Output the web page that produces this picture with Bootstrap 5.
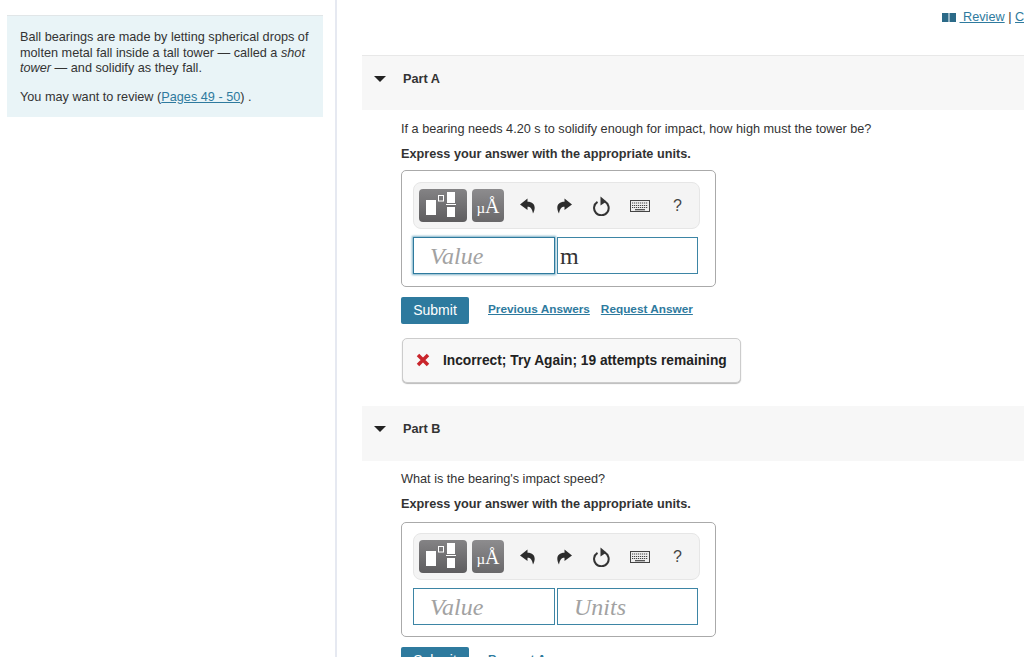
<!DOCTYPE html>
<html lang="en">
<head>
  <meta charset="UTF-8" />
  <title>Part A</title>
  <link href="https://cdn.jsdelivr.net/npm/bootstrap@5.3.0/dist/css/bootstrap.min.css" rel="stylesheet">
  <style>
    html, body { height: 657px; overflow: hidden; }
    body { font-family: "Liberation Sans", Arial, sans-serif; font-size: 12.7px; color: #333; background: #fff; }
    a { color: #2e7a9e; }
    .side-col { width: 337px; flex: none; border-right: 2px solid #e6e9f1; padding: 15px 12px 0 7px; }
    .intro-box { background: #e9f4f7; border-top: 1px solid #e1e6e8; height: 102px; padding: 14px 12px 0 13px; line-height: 15.6px; }
    .intro-box p { margin: 0 0 13px; }
    .main-col { flex: 1; min-width: 0; padding-left: 25px; }
    .top-links { height: 55px; padding: 10px 0 0 580px; white-space: nowrap; overflow: hidden; line-height: 15px; }
    .part-head { height: 55px; background: #f7f7f7; margin-bottom: 10px; padding: 0 0 7px 12px; font-weight: 700; color: #333; }
    .part-head.first-part { border-top: 1px solid #e8e8e8; }
    .caret-down { width: 0; height: 0; border-left: 6px solid transparent; border-right: 6px solid transparent; border-top: 6px solid #222; margin: -2px 17px 0 0; }
    .part-body { padding-left: 39px; }
    .part-body p { margin: 0; line-height: 16px; }
    .prompt { margin-bottom: 9px !important; padding-top: 1px; }
    .prompt.second-prompt { padding-top: 0; }
    .answer-box { width: 315px; border: 1px solid #aaa; border-radius: 5px; margin-top: 8px; padding: 11px 11px 12px; }
    .answer-box.second-box { margin-top: 10px; padding: 10px 11px 11px; }
    .tool-bar { width: 287px; height: 47px; background: #f4f4f4; border: 1px solid #e6e6e6; border-radius: 8px; padding: 6px 5px; }
    .tool-btn { height: 33px; border-radius: 4px; background: linear-gradient(#848385, #5e5d5f); }
    .tool-btn.wide { width: 48px; margin-right: 5px; }
    .tool-btn.narrow { width: 32px; background: linear-gradient(#8d8c8e, #69686a); color: #fff; font-family: "Liberation Serif", serif; font-size: 15px; line-height: 35px; text-align: center; white-space: nowrap; }
    .tool-btn.narrow b { font-weight: 400; font-size: 20px; }
    .tool-icons { padding-left: 16px; gap: 20px; color: #333; }
    .tool-icons .qmark { font-size: 16px; color: #444; margin-left: 3px; }
    .field-row { gap: 2px; margin-top: 8px; }
    .field { height: 37px; border: 1px solid #3d85a5; background: #fff; font-family: "Liberation Serif", serif; font-size: 24px; line-height: 36px; width: 142px; color: #333; }
    .field.unit { width: 141px; }
    .field.hint { color: #a2a2a2; font-style: italic; padding-left: 16px; }
    .field.active { box-shadow: 0 0 2px 1px #7db0c6; border-color: #2e7a9e; }
    .field.fill { padding-left: 2px; }
    .action-row { margin-top: 10px; gap: 19px; }
    .submit-btn { width: 68px; height: 27px; background: #2e7a9e; color: #fff; border-radius: 2px; font-size: 14px; padding: 0; border: 0; line-height: 27px; }
    .action-links { gap: 11px; font-size: 11.8px; font-weight: 700; margin-top: -2px; }
    .result-box { width: 339px; height: 45px; margin: 14px 0 23px 1px; background: #f8f8f8; border: 1px solid #ccc; border-radius: 5px; box-shadow: 0 1px 1px #bbb; padding: 1px 0 0 13px; font-size: 13.75px; font-weight: 700; color: #222; gap: 13px; }
    .result-box svg { margin-top: -2px; }
  </style>
</head>
<body>

  <svg width="0" height="0" class="d-block">
    <defs>
      <symbol id="ic-tmpl" viewBox="0 0 48 33">
        <rect x="7" y="11" width="10" height="15" fill="#fff"/>
        <rect x="19.500" y="6.500" width="5" height="5.500" fill="none" stroke="#fff"/>
        <rect x="28" y="3" width="8" height="11" fill="#fff"/>
        <rect x="27" y="15" width="10" height="1" fill="#fff"/>
        <rect x="28" y="18" width="8" height="10" fill="#fff"/>
      </symbol>
      <symbol id="ic-undo" viewBox="0 0 16 16">
        <path d="M7.500 0.500 L0 6.500 L7.500 12 V8.800 C10.500 8.800 12 10.500 13 15.500 C16.500 9 14.500 3.800 7.500 3.800 Z" fill="#2c2c2c"/>
      </symbol>
      <symbol id="ic-reset" viewBox="0 0 18 20">
        <path d="M5.500 5.800 A7.300 7.300 0 1 0 12.500 5.400" fill="none" stroke="#333" stroke-width="2"/>
        <path d="M8.500 0.500 L14.500 5.500 L8.500 9.500 Z" fill="#333"/>
      </symbol>
      <symbol id="ic-keys" viewBox="0 0 20 12">
        <rect x="0.500" y="0.500" width="19" height="11" fill="#eee" stroke="#444"/>
        <path d="M2 3 H18 M2 5.500 H18 M2 7.500 H18" stroke="#444" stroke-width="1.200" stroke-dasharray="1.200 .8"/>
        <path d="M5 9.700 H15" stroke="#444" stroke-width="1.200"/>
      </symbol>
    </defs>
  </svg>

  <div class="d-flex">
    <!-- Intro column -->
    <div class="side-col">
      <div class="intro-box">
        <p>Ball bearings are made by letting spherical drops of molten metal fall inside a tall tower &mdash; called a <i>shot tower</i> &mdash; and solidify as they fall.</p>
        <p>You may want to review (<a href="#">Pages 49 - 50</a>) .</p>
      </div>
    </div>

    <div class="main-col">
      <div class="top-links">
        <svg width="14" height="9" viewBox="0 0 14 9"><rect width="6.500" height="9" fill="#2b6a88"/><rect x="7.500" width="6.500" height="9" fill="#2b6a88"/></svg>
        <a href="#">&nbsp;Review</a> | <a href="#">Constants</a>
      </div>

      <!-- Part A -->
      <div class="part-head first-part d-flex align-items-center"><span class="caret-down"></span>Part A</div>
      <div class="part-body">
        <p class="prompt">If a bearing needs 4.20 s to solidify enough for impact, how high must the tower be?</p>
        <p><b>Express your answer with the appropriate units.</b></p>
        <div class="answer-box">
          <div class="tool-bar d-flex align-items-center">
            <div class="tool-btn wide"><svg width="48" height="33"><use href="#ic-tmpl"/></svg></div>
            <div class="tool-btn narrow">&micro;<b>&Aring;</b></div>
            <div class="tool-icons d-flex align-items-center">
              <svg width="16" height="16"><use href="#ic-undo"/></svg>
              <svg width="16" height="16" transform="scale(-1 1)"><use href="#ic-undo"/></svg>
              <svg width="18" height="20"><use href="#ic-reset"/></svg>
              <svg width="20" height="12"><use href="#ic-keys"/></svg>
              <span class="qmark">?</span>
            </div>
          </div>
          <div class="field-row d-flex">
            <div class="field hint active">Value</div>
            <div class="field unit fill">m</div>
          </div>
        </div>
        <div class="action-row d-flex align-items-center">
          <button class="submit-btn btn">Submit</button>
          <div class="action-links d-flex"><a href="#">Previous Answers</a><a href="#">Request Answer</a></div>
        </div>
        <div class="result-box d-flex align-items-center">
          <svg width="14" height="14" viewBox="0 0 14 14"><path d="M2 2 L12 12 M12 2 L2 12" stroke="#c9252c" stroke-width="3.500"/></svg>
          <span>Incorrect; Try Again; 19 attempts remaining</span>
        </div>
      </div>

      <!-- Part B -->
      <div class="part-head d-flex align-items-center"><span class="caret-down"></span>Part B</div>
      <div class="part-body">
        <p class="prompt second-prompt">What is the bearing's impact speed?</p>
        <p><b>Express your answer with the appropriate units.</b></p>
        <div class="answer-box second-box">
          <div class="tool-bar d-flex align-items-center">
            <div class="tool-btn wide"><svg width="48" height="33"><use href="#ic-tmpl"/></svg></div>
            <div class="tool-btn narrow">&micro;<b>&Aring;</b></div>
            <div class="tool-icons d-flex align-items-center">
              <svg width="16" height="16"><use href="#ic-undo"/></svg>
              <svg width="16" height="16" transform="scale(-1 1)"><use href="#ic-undo"/></svg>
              <svg width="18" height="20"><use href="#ic-reset"/></svg>
              <svg width="20" height="12"><use href="#ic-keys"/></svg>
              <span class="qmark">?</span>
            </div>
          </div>
          <div class="field-row d-flex">
            <div class="field hint">Value</div>
            <div class="field unit hint">Units</div>
          </div>
        </div>
        <div class="action-row d-flex align-items-center">
          <button class="submit-btn btn">Submit</button>
          <div class="action-links d-flex"><a href="#">Request Answer</a></div>
        </div>
      </div>
    </div>
  </div>

  <script src="https://cdn.jsdelivr.net/npm/bootstrap@5.3.0/dist/js/bootstrap.bundle.min.js"></script>
</body>
</html>
